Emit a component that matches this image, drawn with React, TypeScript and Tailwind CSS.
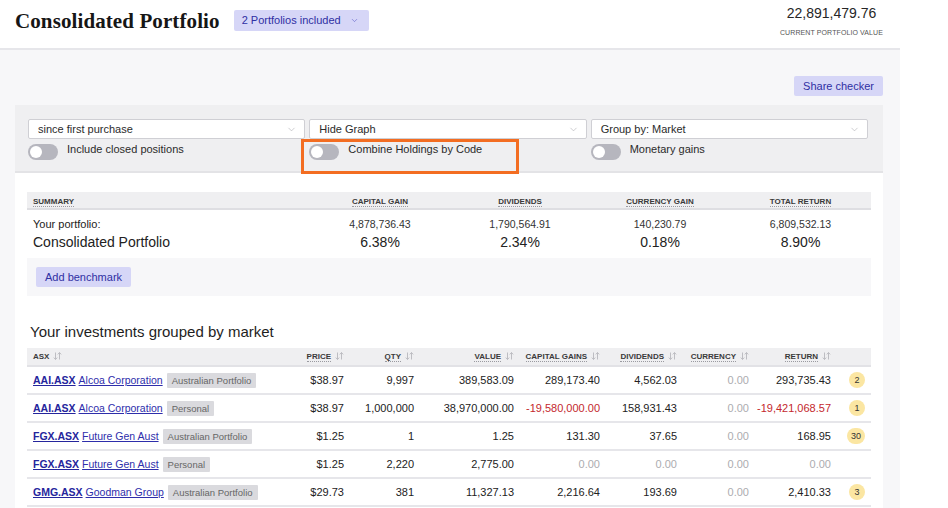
import { ChevronDown } from "lucide-react";

const sans = { fontFamily: '"Liberation Sans", Arial, sans-serif' };

type Row = {
  code: string;
  name: string;
  tag: string;
  price: string;
  qty: string;
  value: string;
  cap: string;
  div: string;
  cur: string;
  ret: string;
  badge?: string;
};

const rows: Row[] = [
  { code: "AAI.ASX", name: "Alcoa Corporation", tag: "Australian Portfolio", price: "$38.97", qty: "9,997", value: "389,583.09", cap: "289,173.40", div: "4,562.03", cur: "0.00", ret: "293,735.43", badge: "2" },
  { code: "AAI.ASX", name: "Alcoa Corporation", tag: "Personal", price: "$38.97", qty: "1,000,000", value: "38,970,000.00", cap: "-19,580,000.00", div: "158,931.43", cur: "0.00", ret: "-19,421,068.57", badge: "1" },
  { code: "FGX.ASX", name: "Future Gen Aust", tag: "Australian Portfolio", price: "$1.25", qty: "1", value: "1.25", cap: "131.30", div: "37.65", cur: "0.00", ret: "168.95", badge: "30" },
  { code: "FGX.ASX", name: "Future Gen Aust", tag: "Personal", price: "$1.25", qty: "2,220", value: "2,775.00", cap: "0.00", div: "0.00", cur: "0.00", ret: "0.00" },
  { code: "GMG.ASX", name: "Goodman Group", tag: "Australian Portfolio", price: "$29.73", qty: "381", value: "11,327.13", cap: "2,216.64", div: "193.69", cur: "0.00", ret: "2,410.33", badge: "3" },
];

function SortIcon() {
  return (
    <svg width="9" height="8" viewBox="0 0 9 8" className="inline-block ml-[4px] align-[-1px]" fill="none" stroke="#bdbdc2" strokeWidth="1">
      <path d="M2.5 0.5v7M0.8 5.6l1.7 1.9 1.7-1.9" />
      <path d="M6.5 7.5v-7M4.8 2.4l1.7-1.9 1.7 1.9" />
    </svg>
  );
}

function Toggle({ label }: { label: string }) {
  return (
    <div className="flex items-start gap-[9px]">
      <div className="w-[30px] h-[16px] rounded-full bg-[#b6b6be] flex items-center px-[2px] mt-[5px]">
        <div className="w-[12px] h-[12px] rounded-full bg-white" />
      </div>
      <span className="text-[11px] text-[#2b2b2b] leading-[13px] mt-[4px]">{label}</span>
    </div>
  );
}

function Select({ label }: { label: string }) {
  return (
    <div className="h-[20px] bg-white border border-[#cfcfd4] rounded-[2px] flex items-center justify-between pl-[9px] pr-[7px]">
      <span className="text-[11px] text-[#2b2b2b]">{label}</span>
      <ChevronDown size={11} strokeWidth={1.2} color="#a5a5aa" />
    </div>
  );
}

function HeadLabel({ children }: { children: string }) {
  return (
    <span className="border-b border-dotted border-[#9a9aa0] text-[8px] font-bold text-[#3a3a3a] leading-[10px]">
      {children}
    </span>
  );
}

function Num({ v }: { v: string }) {
  const neg = v.startsWith("-");
  const zero = v === "0.00";
  return (
    <span className={neg ? "text-[#c4282d]" : zero ? "text-[#acacb0]" : "text-[#222]"}>{v}</span>
  );
}

export default function App() {
  return (
    <div className="w-[948px] h-[508px] overflow-hidden bg-white flex" style={sans}>
      <div className="w-[900px] flex flex-col">
        {/* header */}
        <div className="h-[50px] shrink-0 border-b-2 border-[#e6e6ea] flex items-start justify-between pl-[15px] pr-[17px]">
          <div className="flex items-center gap-[14px] pt-[9px]">
            <h1
              className="text-[21px] font-bold text-[#161616] leading-[24px] tracking-[0.1px]"
              style={{ fontFamily: '"Liberation Serif", "Times New Roman", serif' }}
            >
              Consolidated Portfolio
            </h1>
            <div className="h-[21px] rounded-[2px] bg-[#d6d6f7] flex items-center gap-[9px] pl-[8px] pr-[10px] -mt-[1px]">
              <span className="text-[11px] text-[#2f2fa3]">2 Portfolios included</span>
              <ChevronDown size={9} strokeWidth={1.6} color="#5e5ec9" />
            </div>
          </div>
          <div className="flex flex-col items-center pt-[5px]">
            <span className="text-[14px] text-[#262626] leading-[17px]">22,891,479.76</span>
            <span className="text-[7px] text-[#555] leading-[9px] mt-[6px] tracking-[0.1px]">CURRENT PORTFOLIO VALUE</span>
          </div>
        </div>

        {/* body */}
        <div className="flex-1 bg-[#f7f7f9] pl-[15px] pr-[17px] flex flex-col">
          <div className="flex justify-end pt-[26px] pb-[9px]">
            <button className="h-[20px] px-[9px] rounded-[2px] bg-[#d6d6f7] text-[11px] text-[#2f2fa3]">Share checker</button>
          </div>

          {/* controls */}
          <div className="relative bg-[#efeff1] border-b-2 border-[#e3e3e6] pl-[13px] pr-[15px] pt-[14px] h-[68px]">
            <div className="grid grid-cols-3 gap-[4px]">
              <div className="flex flex-col">
                <Select label="since first purchase" />
                <Toggle label="Include closed positions" />
              </div>
              <div className="flex flex-col">
                <Select label="Hide Graph" />
                <Toggle label="Combine Holdings by Code" />
              </div>
              <div className="flex flex-col">
                <Select label="Group by: Market" />
                <Toggle label="Monetary gains" />
              </div>
            </div>
            <div className="absolute left-[286px] top-[34px] w-[218px] h-[35px] border-[3px] border-[#f36d22]" />
          </div>

          {/* card */}
          <div className="flex-1 bg-white px-[12px] pt-[19px]">
            {/* summary */}
            <div className="w-[844px]">
              <div className="h-[18px] bg-[#efeff1] border-b-2 border-[#dedee2] grid grid-cols-[283px_140px_140px_140px_141px] items-center leading-[10px]">
                <div className="pl-[6px]"><HeadLabel>SUMMARY</HeadLabel></div>
                <div className="text-center"><HeadLabel>CAPITAL GAIN</HeadLabel></div>
                <div className="text-center"><HeadLabel>DIVIDENDS</HeadLabel></div>
                <div className="text-center"><HeadLabel>CURRENCY GAIN</HeadLabel></div>
                <div className="text-center"><HeadLabel>TOTAL RETURN</HeadLabel></div>
              </div>
              <div className="h-[48px] grid grid-cols-[283px_140px_140px_140px_141px] items-start pt-[7px]">
                <div className="pl-[6px] flex flex-col">
                  <span className="text-[11px] text-[#222] leading-[14px]">Your portfolio:</span>
                  <span className="text-[14px] text-[#222] leading-[18px] mt-[2px]">Consolidated Portfolio</span>
                </div>
                {[
                  ["4,878,736.43", "6.38%"],
                  ["1,790,564.91", "2.34%"],
                  ["140,230.79", "0.18%"],
                  ["6,809,532.13", "8.90%"],
                ].map(([a, b]) => (
                  <div key={a} className="flex flex-col items-center">
                    <span className="text-[10.5px] text-[#333] leading-[14px]">{a}</span>
                    <span className="text-[14px] text-[#222] leading-[18px] mt-[2px]">{b}</span>
                  </div>
                ))}
              </div>
              <div className="h-[38px] bg-[#f7f7f9] flex items-center pl-[9px]">
                <button className="h-[20px] px-[9px] rounded-[2px] bg-[#d6d6f7] text-[11px] text-[#2f2fa3]">Add benchmark</button>
              </div>
            </div>

            <h2 className="text-[15px] text-[#1e1e1e] leading-[18px] pl-[3px] mt-[27px] mb-[7px]">Your investments grouped by market</h2>

            {/* investments */}
            <table className="w-[844px] table-fixed border-collapse">
              <thead>
                <tr className="h-[18px] bg-[#efeff1] border-b-2 border-[#e2e2e6] text-[8px] leading-[10px]">
                  <th className="w-[263px] text-left pl-[6px] font-normal"><span className="text-[8px] font-bold text-[#3a3a3a]">ASX</span><SortIcon /></th>
                  <th className="w-[60px] text-right pr-[6px] font-normal"><HeadLabel>PRICE</HeadLabel><SortIcon /></th>
                  <th className="w-[70px] text-right pr-[6px] font-normal"><HeadLabel>QTY</HeadLabel><SortIcon /></th>
                  <th className="w-[100px] text-right pr-[6px] font-normal"><HeadLabel>VALUE</HeadLabel><SortIcon /></th>
                  <th className="w-[86px] text-right pr-[6px] font-normal"><HeadLabel>CAPITAL GAINS</HeadLabel><SortIcon /></th>
                  <th className="w-[77px] text-right pr-[6px] font-normal"><HeadLabel>DIVIDENDS</HeadLabel><SortIcon /></th>
                  <th className="w-[72px] text-right pr-[6px] font-normal"><HeadLabel>CURRENCY</HeadLabel><SortIcon /></th>
                  <th className="w-[82px] text-right pr-[6px] font-normal"><HeadLabel>RETURN</HeadLabel><SortIcon /></th>
                  <th className="w-[34px]" />
                </tr>
              </thead>
              <tbody>
                {rows.map((r, i) => (
                  <tr key={i} className="h-[28px] border-b-2 border-[#e6e6ea] text-[11px] leading-[14px]">
                    <td className="pl-[6px]">
                      <div className="flex items-center text-[10.5px]">
                        <a className="font-bold text-[#25259c] underline underline-offset-[1px]">{r.code}</a>
                        <a className="ml-[3px] text-[#2e2eab] underline underline-offset-[1px]">{r.name}</a>
                        <span className="ml-[4px] bg-[#dadade] text-[#666] text-[9.5px] leading-[15px] px-[5px] rounded-[1px]">{r.tag}</span>
                      </div>
                    </td>
                    <td className="text-right pr-[6px] text-[#222]">{r.price}</td>
                    <td className="text-right pr-[6px] text-[#222]">{r.qty}</td>
                    <td className="text-right pr-[6px] text-[#222]">{r.value}</td>
                    <td className="text-right pr-[6px]"><Num v={r.cap} /></td>
                    <td className="text-right pr-[6px]"><Num v={r.div} /></td>
                    <td className="text-right pr-[6px]"><Num v={r.cur} /></td>
                    <td className="text-right pr-[6px]"><Num v={r.ret} /></td>
                    <td>
                      {r.badge && (
                        <div className="flex justify-end pr-[6px]">
                          <span className="min-w-[16px] h-[16px] px-[4px] rounded-full bg-[#fbe6a2] text-[9px] text-[#333] flex items-center justify-center">{r.badge}</span>
                        </div>
                      )}
                    </td>
                  </tr>
                ))}
              </tbody>
            </table>
          </div>
        </div>
      </div>
    </div>
  );
}
